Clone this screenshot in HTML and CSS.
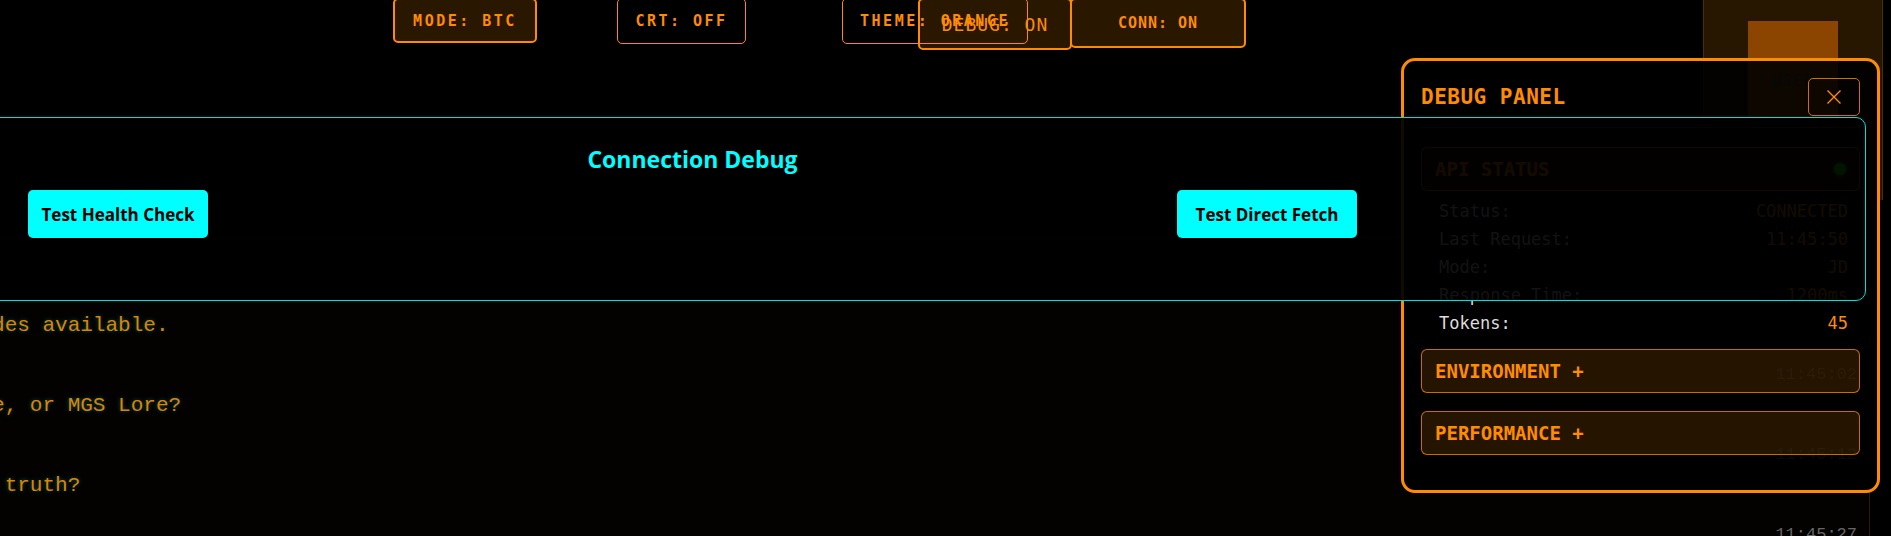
FILE: index.html
```html
<!DOCTYPE html>
<html lang="en">
<head>
<meta charset="utf-8">
<title>Terminal</title>
<link rel="stylesheet" href="styles.css">
</head>
<body>
<div class="page">
  <header class="topbar">
    <div class="toggles">
      <button class="toggle toggle-on toggle-mode">MODE: BTC</button>
      <button class="toggle toggle-crt">CRT: OFF</button>
      <button class="toggle toggle-theme">THEME: ORANGE</button>
    </div>
    <aside class="user-card">
      <div class="avatar"><span class="avatar-label">USER</span></div>
    </aside>
  </header>

  <section class="chat">
    <div class="chat-head"></div>
    <div class="msg">
      <p class="msg-text">Codec open. Three chat modes available.</p>
      <span class="msg-time">11:45:02</span>
    </div>
    <div class="msg">
      <p class="msg-text">Pick a topic: Crypto, Code, or MGS Lore?</p>
      <span class="msg-time">11:45:12</span>
    </div>
    <div class="msg">
      <p class="msg-text">Are you ready to face the truth?</p>
      <span class="msg-time">11:45:27</span>
    </div>
  </section>

  <div class="status-toggles">
    <button class="toggle toggle-on toggle-debug">DEBUG: ON</button>
    <button class="toggle toggle-on toggle-conn">CONN: ON</button>
  </div>

  <aside class="debug-panel">
    <div class="dp-header">
      <h2 class="dp-title">DEBUG PANEL</h2>
      <button class="dp-close" aria-label="Close">
        <svg width="14" height="14" viewBox="0 0 14 14"><path d="M0.5 0.5L13.5 13.5M13.5 0.5L0.5 13.5" stroke="#ff8c00" stroke-width="1.4" fill="none"/></svg>
      </button>
    </div>
    <div class="dp-section dp-section-open">
      <div class="dp-sec-head"><span>API STATUS</span><span class="dp-dot"></span></div>
      <div class="dp-rows">
        <div class="dp-row"><span class="dp-label">Status:</span><span class="dp-value">CONNECTED</span></div>
        <div class="dp-row"><span class="dp-label">Last Request:</span><span class="dp-value">11:45:50</span></div>
        <div class="dp-row"><span class="dp-label">Mode:</span><span class="dp-value">JD</span></div>
        <div class="dp-row"><span class="dp-label">Response Time:</span><span class="dp-value">1200ms</span></div>
        <div class="dp-row"><span class="dp-label">Tokens:</span><span class="dp-value">45</span></div>
      </div>
    </div>
    <div class="dp-section dp-section-env">
      <div class="dp-sec-head"><span>ENVIRONMENT +</span></div>
    </div>
    <div class="dp-section dp-section-perf">
      <div class="dp-sec-head"><span>PERFORMANCE +</span></div>
    </div>
  </aside>

  <div class="conn-debug">
    <h3 class="cd-title">Connection Debug</h3>
    <div class="cd-actions">
      <button class="cd-btn">Test Health Check</button>
      <button class="cd-btn">Test Direct Fetch</button>
    </div>
  </div>
</div>
</body>
</html>
```

FILE: styles.css
```css
* { box-sizing: border-box; }

html, body {
  margin: 0;
  padding: 0;
  background: #000;
}

body {
  font-family: "DejaVu Sans Mono", monospace;
  color: #ff8c00;
  overflow: hidden;
}

button {
  font-family: inherit;
  cursor: pointer;
}

.page {
  position: relative;
  width: 1891px;
  height: 536px;
  overflow: hidden;
}

/* ---------- top bar ---------- */
.topbar {
  display: flex;
  align-items: flex-start;
  height: 237px;
  padding-left: 393px;
  padding-right: 8px;
}

.toggles {
  display: flex;
  align-items: flex-start;
  margin-top: -2px;
}

.toggle {
  display: flex;
  align-items: center;
  justify-content: center;
  padding: 0;
  background: transparent;
  color: #ff8c00;
  border: 1px solid #ff8c00;
  border-radius: 5px;
  font-family: "DejaVu Sans Mono", monospace;
  font-weight: bold;
  font-size: 15px;
  letter-spacing: 2.5px;
}

.toggle-on {
  border-width: 2px;
  background: rgba(255, 140, 0, 0.16);
}

.toggle-mode { width: 144px; height: 45px; }
.toggle-crt { width: 129px; height: 46px; margin-left: 80px; }
.toggle-theme { width: 186px; height: 46px; margin-left: 96px; }

.user-card {
  margin-left: auto;
  margin-top: -10px;
  width: 180px;
  height: 210px;
  background: #271700;
  border-left: 1px solid #4d2e00;
  border-right: 1px solid #4d2e00;
  display: flex;
  justify-content: center;
  padding-top: 31px;
}

.avatar {
  width: 90px;
  height: 110px;
  background: #8b4500;
  display: flex;
  justify-content: center;
  padding-top: 50px;
}

.avatar-label {
  color: #4a4a4a;
  font-weight: bold;
  font-size: 16px;
  letter-spacing: 1px;
}

/* ---------- chat ---------- */
.chat {
  margin-left: -343px;
  margin-right: 21px;
  padding-left: 20px;
  padding-right: 12px;
  height: 320px;
  border-top: 1px solid rgba(255, 140, 0, 0.18);
  border-right: 1px solid rgba(255, 140, 0, 0.18);
  background: rgba(255, 140, 0, 0.012);
}

.chat-head {
  height: 36px;
  margin-left: -20px;
  border-bottom: 1px solid rgba(255, 140, 0, 0.15);
}

.msg {
  display: flex;
  flex-direction: column;
  height: 80px;
}

.chat-head + .msg { margin-top: 40px; }

.msg-text {
  margin: 0;
  font-family: "Liberation Mono", monospace;
  font-size: 21px;
  line-height: 24px;
  white-space: nowrap;
  color: #dd8400;
  text-shadow: 0 0 4px rgba(0, 190, 190, 0.45);
}

.msg-time {
  align-self: flex-end;
  margin-top: 27px;
  font-family: "Liberation Mono", monospace;
  font-size: 17px;
  line-height: 20px;
  color: #666666;
}

/* ---------- status toggles ---------- */
.status-toggles {
  position: absolute;
  left: 918px;
  top: -2px;
  display: flex;
  align-items: flex-start;
}

.toggle-debug {
  width: 154px;
  height: 52px;
  font-weight: normal;
  font-size: 18px;
  letter-spacing: 1px;
}

.toggle-conn {
  width: 176px;
  height: 50px;
  margin-left: -2px;
  letter-spacing: 1px;
}

/* ---------- debug panel ---------- */
.debug-panel {
  position: absolute;
  top: 58px;
  right: 11px;
  width: 479px;
  padding: 17px;
  border: 3px solid #ff8c00;
  border-radius: 14px;
  background: rgba(0, 0, 0, 0.9);
}

.dp-header {
  display: flex;
  align-items: center;
  justify-content: space-between;
  padding-bottom: 11px;
  border-bottom: 1px solid rgba(255, 140, 0, 0.35);
  margin-bottom: 19px;
}

.dp-title {
  margin: 0;
  font-size: 21px;
  letter-spacing: 0.5px;
  font-weight: bold;
  color: #ff8c00;
}

.dp-close {
  width: 52px;
  height: 38px;
  display: flex;
  align-items: center;
  justify-content: center;
  padding: 0;
  background: transparent;
  border: 1px solid rgba(255, 140, 0, 0.8);
  border-radius: 5px;
}

.dp-sec-head {
  display: flex;
  align-items: center;
  justify-content: space-between;
  padding: 10px 13px;
  line-height: 22px;
  font-size: 19px;
  font-weight: bold;
  color: #ff8c00;
  background: rgba(255, 140, 0, 0.14);
  border: 1px solid rgba(255, 140, 0, 0.75);
  border-radius: 6px;
}

.dp-dot {
  width: 12px;
  height: 12px;
  border-radius: 50%;
  background: #00ff00;
  box-shadow: 0 0 5px #00ff00;
}

.dp-section-open { margin-bottom: 12px; }
.dp-section-env { margin-bottom: 18px; }
.dp-section-perf { margin-bottom: 18px; }

.dp-rows {
  padding: 6px 12px 0 18px;
}

.dp-row {
  display: flex;
  justify-content: space-between;
  font-size: 17px;
  line-height: 28px;
}

.dp-label { color: #dddddd; }
.dp-value { color: #ff8c00; }

/* ---------- connection debug overlay ---------- */
.conn-debug {
  position: absolute;
  left: -481px;
  top: 117px;
  width: 2347px;
  height: 184px;
  padding-top: 25px;
  border: 1px solid #00dede;
  border-radius: 10px;
  background: rgba(0, 0, 0, 0.92);
  font-family: "Open Sans", sans-serif;
}

.cd-title {
  margin: 0 0 15px;
  text-align: center;
  font-size: 23px;
  font-weight: bold;
  line-height: normal;
  color: #00ffff;
}

.cd-actions {
  display: flex;
  justify-content: center;
  gap: 969px;
}

.cd-btn {
  width: 180px;
  height: 48px;
  padding: 0;
  border: none;
  border-radius: 5px;
  background: #00ffff;
  color: #000;
  font-family: "Open Sans", sans-serif;
  font-size: 17px;
  font-weight: bold;
}
```
